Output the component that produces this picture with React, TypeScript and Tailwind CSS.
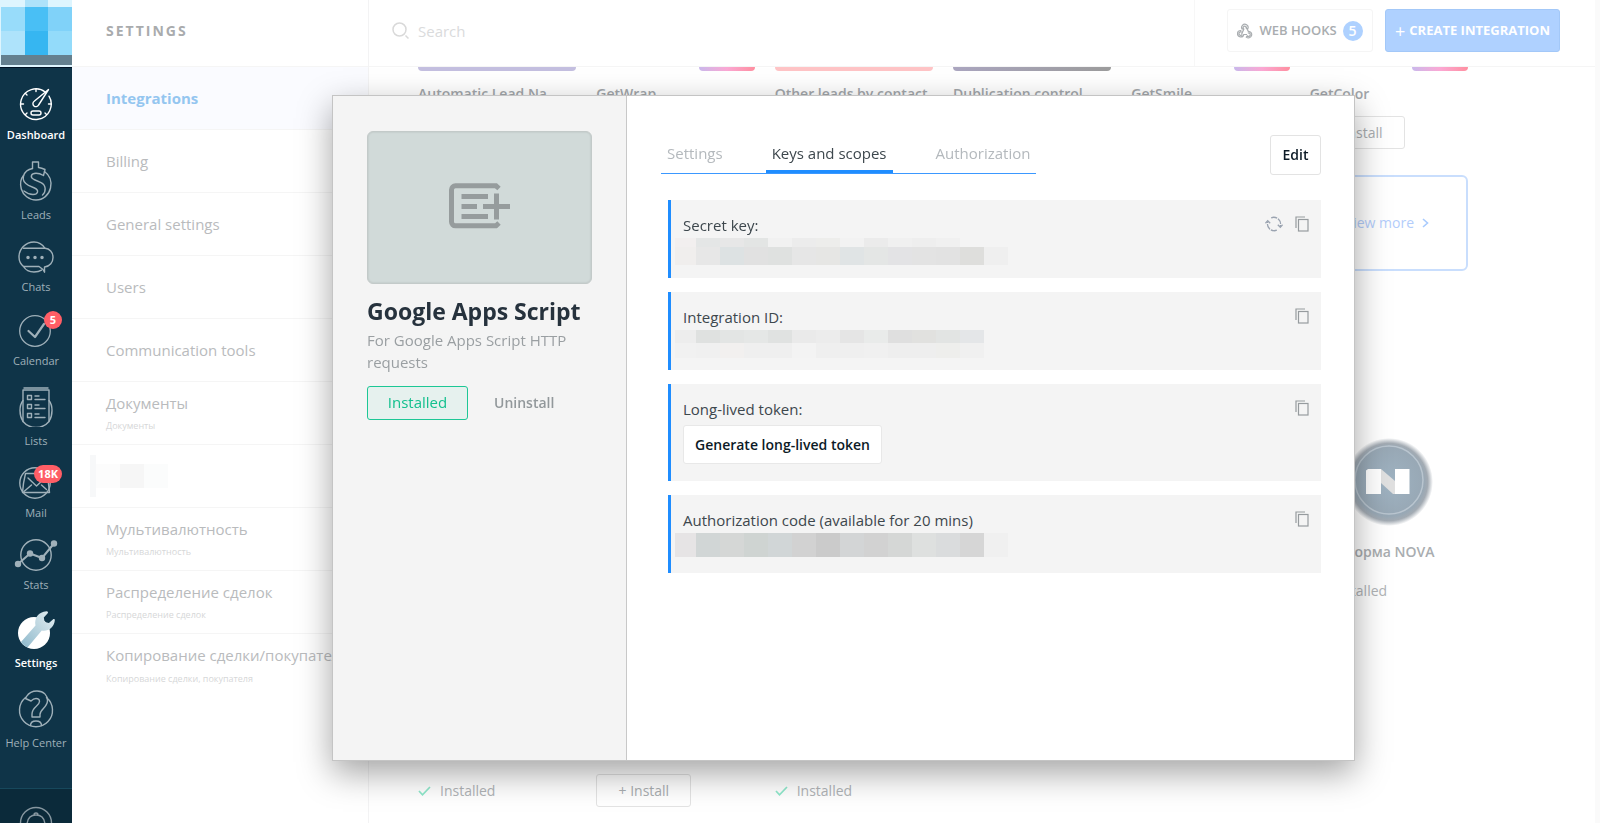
import React, { useState } from 'react';
import clsx from 'clsx';

type IconProps = { className?: string };

const stroke = {
  fill: 'none',
  stroke: 'currentColor',
  strokeWidth: 1.4,
  strokeLinecap: 'round' as const,
  strokeLinejoin: 'round' as const,
};

const DashboardIcon: React.FC = () => (
  <svg width="36" height="34" viewBox="0 0 36 34" {...stroke}>
    <path d="M27.5 5.2A15.3 15.3 0 1 0 31 9.2" />
    <path d="M30.5 2.5 16.2 14.2a3 3 0 1 0 4.4 3.8L30.5 2.5Z" />
    <rect x="13" y="24" width="10" height="4" rx="2" />
    <path d="M18 2v2.5M3 17h2.5M30.5 17H33M7.5 6.5 9 8M7.5 27.5 9 26M28.5 27.5 27 26" />
  </svg>
);

const LeadsIcon: React.FC = () => (
  <svg width="36" height="40" viewBox="0 0 36 40" {...stroke}>
    <path d="M14.500 7.500V1h6v5.500c2.500.3 4.500 1 6.500 2l-1.500 6c-2.500-1.500-5-2.300-7.500-2.300-5 0-6.500 4-2 6.300l7 3.200c5 2.300 5.500 8.800 1.500 12.300" />
    <path d="M14.500 7.500C9 8.500 6.500 11.500 5.500 15c-1 4 .5 7 5 9.300l6 2.700c5 2.300 3.500 6.500-1.500 6.500-3.500 0-6.500-1.500-9-3.500" />
    <path d="M26.500 10.500c5.500 4 7.500 10 6 16.500C31 34 25 39 18 39S5 34 3.300 28C2 23 2.500 18 5.500 14.500" />
  </svg>
);

const ChatsIcon: React.FC = () => (
  <svg width="38" height="32" viewBox="0 0 38 32" {...stroke}>
    <path d="M27.500 31 26 28.500 22 25.500H6.500C8.500 28.800 12.500 31 17 31c3 0 5.500-.5 7.500-1.800" />
    <path d="M27.500 31v-5C33 25.500 36 21 36 16.500 36 11 32.500 7.500 28 7.300H6.500" />
    <path d="M6.500 25.500C3.500 23 2 19.500 2 16 2 8 8.500 1 17 1c4.500 0 8.500 2.500 11 6.300" />
    <path d="M11 16.500h.01M18 16.500h.01M25 16.500h.01" strokeWidth="3.500" />
  </svg>
);

const CalendarIcon: React.FC = () => (
  <svg width="34" height="34" viewBox="0 0 34 34" {...stroke}>
    <circle cx="16" cy="18" r="15.300" strokeWidth="1.300" />
    <path d="m9.500 18 6.500 6L25 11" strokeWidth="2.200" />
  </svg>
);

const ListsIcon: React.FC = () => (
  <svg width="36" height="40" viewBox="0 0 36 40" {...stroke}>
    <path d="M6 1h24M5 3h26v31.500a17 17 0 0 1-26 0V3Z" />
    <path d="M5 13.500c-4 5-4 14.500 0 21M31 13.500c4 5 4 14.500 0 21" />
    <path d="M9.500 8.500h4v4h-4ZM9.500 17.500h4v4h-4ZM9.500 26.500h4v4h-4Z" />
    <path d="M17 9h4M17 12.500h10M17 18h4M17 21.500h10M17 27h4M17 30.500h10" />
  </svg>
);

const MailIcon: React.FC = () => (
  <svg width="36" height="32" viewBox="0 0 36 32" {...stroke}>
    <circle cx="17" cy="16" r="15.200" />
    <path d="M4.500 25.500c.5-8 1.500-13 3-19h20.500c2 6 3.200 11 3.500 19Z" />
    <path d="m10 11 8.500 8L27 11M13.500 18 6 24.500M23.500 18l5 4.500" />
  </svg>
);

const StatsIcon: React.FC = () => (
  <svg width="44" height="32" viewBox="0 0 44 32" {...stroke}>
    <circle cx="22" cy="16" r="15.200" />
    <path d="m4 25 12-10.500L28 19 40 4.500" strokeWidth="2" />
    <g fill="currentColor" stroke="none">
      <circle cx="4" cy="25" r="3.200" />
      <circle cx="16" cy="14.500" r="3.200" />
      <circle cx="28" cy="19" r="3.200" />
      <circle cx="40" cy="4.500" r="3.200" />
    </g>
  </svg>
);

const SettingsIcon: React.FC = () => (
  <svg width="38" height="38" viewBox="0 0 38 38">
    <defs>
      <linearGradient id="wrench" x1="0" y1="1" x2="1" y2="0">
        <stop offset="0" stopColor="#8db8cb" />
        <stop offset="1" stopColor="#e6eff2" />
      </linearGradient>
    </defs>
    <circle cx="17" cy="22" r="16" fill="#fff" />
    <path
      fill="url(#wrench)"
      d="M4 31 18.500 14.500C17 7 21.500 1 29.500.3c1.500 0 2 1.200 1 2.200l-3.700 4 .8 4.500 4.300 1 4-3.600c1-.8 2-.2 1.900 1-.8 7-6.800 11.300-13 10.100L10.500 36.500C8 35.300 5.500 33.500 4 31Z"
    />
  </svg>
);

const HelpIcon: React.FC = () => (
  <svg width="36" height="40" viewBox="0 0 36 40" {...stroke}>
    <path d="M8.500 7.500C11 3.500 14.500 2 19 2c7 0 10.500 4.500 10.500 9.500 0 7-7.500 8.500-7.500 14v2.500h-8v-3c0-7 7.500-8.500 7.500-12.500 0-2-1.500-3-3.500-3s-3.500 1-5 2.500l-5.500-2.500Z" />
    <path d="M7.500 8.500A16.500 16.500 0 1 0 28.500 8.500" />
    <path d="M12.500 36.500c0-3 2.500-4.500 5.500-4.500s5.500 1.500 5.500 4.500" />
  </svg>
);

const BellIcon: React.FC = () => (
  <svg width="36" height="34" viewBox="0 0 36 34" {...stroke}>
    <circle cx="18" cy="17" r="15.500" />
    <path d="M9 20c0-8 3-11 9-11s9 3 9 11M16 9a2 2 0 0 1 4 0" />
  </svg>
);

const SearchIcon: React.FC = () => (
  <svg width="18" height="18" viewBox="0 0 18 18" fill="none" stroke="#d9d9d9" strokeWidth="1.500">
    <circle cx="7.500" cy="7.500" r="6.500" />
    <path d="m13.500 13.500 3 3" />
  </svg>
);

const HookIcon: React.FC = () => (
  <svg width="16" height="16" viewBox="0 0 16 16" fill="none" stroke="#a9adb0" strokeWidth="1.200">
    <path d="M5.500 6.500a3.200 3.200 0 1 1 5.300-.8L9.300 5.200a1.600 1.600 0 1 0-2.500.9L4.500 11.500" />
    <path d="m9 4 2.300 4.300a3.300 3.300 0 1 1-2 5.800l1-1.300a1.700 1.700 0 1 0 .5-2.600" />
    <path d="M10 11.500H6.800a3.200 3.200 0 1 1-3-4l.3 1.500a1.700 1.700 0 1 0 1.100 2.500" />
  </svg>
);

const CheckIcon: React.FC = () => (
  <svg width="13" height="10" viewBox="0 0 13 10" fill="none" stroke="#8fe8cb" strokeWidth="1.700">
    <path d="m1 5 3.500 3.800L12 1" />
  </svg>
);

const RefreshIcon: React.FC = () => (
  <svg width="18" height="16" viewBox="0 0 18 16" fill="none" stroke="#9aa3b0" strokeWidth="1.300">
    <path d="M6.200 1.800A6.800 6.800 0 0 1 15.300 10M11.800 14.200A6.800 6.800 0 0 1 2.700 6" strokeDasharray="6 1" />
    <path d="m12.800 8.800 2.500 2.500 2.300-2.500M.4 7.200l2.300-2.500 2.500 2.500" />
  </svg>
);

const CopyIcon: React.FC = () => (
  <svg width="14" height="16" viewBox="0 0 14 16" fill="none" stroke="#969b9e" strokeWidth="1.200">
    <path d="M1 12V1h9" />
    <rect x="3.500" y="3.500" width="9.500" height="11.500" />
  </svg>
);

const AppPlaceholderIcon: React.FC = () => (
  <svg width="62" height="46" viewBox="0 0 62 46" fill="none" stroke="#969c9d" strokeWidth="5">
    <path d="M50 5.500 47 2.800H6.500a4 4 0 0 0-4 4v32a4 4 0 0 0 4 4H47L50 40" />
    <path d="M12.500 13.500H39M12.500 23.500H28M12.500 33.500H39M34 23.500h27M47.500 10.500v26" />
  </svg>
);

const NovaLogo: React.FC<IconProps> = ({ className }) => (
  <svg className={className} width="88" height="88" viewBox="0 0 88 88">
    <defs>
      <radialGradient id="nova">
        <stop offset="0" stopColor="#9fb3c2" />
        <stop offset="0.78" stopColor="#98a8b5" />
        <stop offset="0.88" stopColor="#a3abb3" />
        <stop offset="1" stopColor="#fff" />
      </radialGradient>
    </defs>
    <circle cx="44" cy="44" r="44" fill="url(#nova)" />
    <circle cx="44" cy="42" r="34" fill="none" stroke="#b9c5cf" strokeWidth="1.500" />
    <path fill="#fff" d="M21 32.500 23 31h13v25H21ZM50 31h14.500v25H50Z" />
    <path fill="#e0e0e0" d="m36 31 14 12v13h-2L36 45Z" />
  </svg>
);

const sideItems = [
  { label: 'Dashboard', icon: DashboardIcon, bright: true },
  { label: 'Leads', icon: LeadsIcon },
  { label: 'Chats', icon: ChatsIcon },
  { label: 'Calendar', icon: CalendarIcon, badge: '5' },
  { label: 'Lists', icon: ListsIcon },
  { label: 'Mail', icon: MailIcon, badge: '18K' },
  { label: 'Stats', icon: StatsIcon },
  { label: 'Settings', icon: SettingsIcon, bright: true },
  { label: 'Help Center', icon: HelpIcon },
];

const settingsItems: { label?: string; sub?: string; active?: boolean }[] = [
  { label: 'Integrations', active: true },
  { label: 'Billing' },
  { label: 'General settings' },
  { label: 'Users' },
  { label: 'Communication tools' },
  { label: 'Документы', sub: 'Документы' },
  {},
  { label: 'Мультивалютность', sub: 'Мультивалютность' },
  { label: 'Распределение сделок', sub: 'Распределение сделок' },
  { label: 'Копирование сделки/покупателя', sub: 'Копирование сделки, покупателя' },
];

const widgets = [
  { title: 'Automatic Lead Na', strip: 'w-full bg-[#c4bfe0]' },
  { title: 'GetWrap', strip: 'ml-auto w-14 bg-linear-to-r from-[#c9b8ec] via-[#fba8d4] to-[#ff8fa0]' },
  { title: 'Other leads by contact', strip: 'w-full bg-[#ffc4c6]' },
  { title: 'Dublication control', strip: 'w-full bg-linear-to-r from-[#aba6c0] to-[#9c9c9c]' },
  { title: 'GetSmile', strip: 'ml-auto w-14 bg-linear-to-r from-[#c9b8ec] via-[#fba8d4] to-[#ff8fa0]' },
  { title: 'GetColor', strip: 'ml-auto w-14 bg-linear-to-r from-[#c9b8ec] via-[#fba8d4] to-[#ff8fa0]', install: true },
];

const logoTiles = [
  ['bg-[#def5fe]', 'bg-[#ade2fa]', 'bg-[#def5fe]'],
  ['bg-[#98dcfa]', 'bg-[#49bff5]', 'bg-[#80d2f9]'],
  ['bg-[#aee3fb]', 'bg-[#36b6f1]', 'bg-[#93dbfa]'],
];

const secretTiles = [
  {
    height: 'h-[9px]',
    tiles: ['bg-[#f2efef]', 'bg-[#e4e6e6]', 'bg-[#e7e7e7]', 'bg-[#e3e5e4]', 'bg-[#f1f1f1]', 'bg-[#ececec]', 'bg-[#ededeb]', 'bg-[#f2f2f2]', 'bg-[#ebebeb]', 'bg-[#f0f0f0]', 'bg-[#eeeeee]', 'bg-[#f0f0f0]'],
  },
  {
    height: 'h-[18px]',
    tiles: ['bg-[#f0eeed]', 'bg-[#e7e7e7]', 'bg-[#dde2e3]', 'bg-[#e1e1e1]', 'bg-[#dfe1e0]', 'bg-[#e6e6e6]', 'bg-[#e6e6e4]', 'bg-[#e0e4e5]', 'bg-[#e4e6e5]', 'bg-[#e3e3e5]', 'bg-[#e3e3e3]', 'bg-[#e2e2e2]', 'bg-[#dededc]', 'bg-[#efefef]'],
  },
];

const idTiles = [
  {
    height: 'h-[13px]',
    tiles: ['bg-[#ededed]', 'bg-[#dfe1e0]', 'bg-[#e3e5e4]', 'bg-[#e5e7e6]', 'bg-[#e0e2e1]', 'bg-[#eaeaea]', 'bg-[#ececec]', 'bg-[#e5e5e5]', 'bg-[#e9ebea]', 'bg-[#dfdfdf]', 'bg-[#e1e1df]', 'bg-[#e2e4e3]', 'bg-[#e4e6e8]'],
  },
  {
    height: 'h-[15px]',
    tiles: ['bg-[#f1f1f1]', 'bg-[#f0f0f0]', 'bg-[#f2f0ef]', 'bg-[#efefef]', 'bg-[#efefef]', 'bg-[#f3f3f3]', 'bg-[#efefef]', 'bg-[#efefef]', 'bg-[#f0f0f0]', 'bg-[#eeeeee]', 'bg-[#eeeeee]', 'bg-[#eeeeec]', 'bg-[#f0f0f0]'],
  },
];

const codeTiles = [
  {
    height: 'h-[24px]',
    tiles: ['bg-[#e6e4e5]', 'bg-[#d1d6d6]', 'bg-[#d5d7d6]', 'bg-[#cfd4d2]', 'bg-[#d1d6d7]', 'bg-[#d2d2d2]', 'bg-[#cbcbcb]', 'bg-[#d3d5d6]', 'bg-[#d2d2d2]', 'bg-[#d5d7d6]', 'bg-[#dee0df]', 'bg-[#dadcdd]', 'bg-[#d6d6d6]', 'bg-[#f0f0f0]'],
  },
];

const MaskedValue: React.FC<{ rows: typeof codeTiles }> = ({ rows }) => (
  <div className="-ml-2">
    {rows.map((row, i) => (
      <div key={i} className={clsx('flex', row.height)}>
        {row.tiles.map((tile, j) => (
          <span key={j} className={clsx(tile, j === 0 ? 'w-[21px]' : 'w-6')} />
        ))}
      </div>
    ))}
  </div>
);

const KeyBlock: React.FC<{ label: string; refresh?: boolean; children: React.ReactNode }> = ({ label, refresh, children }) => (
  <section className="flex min-h-[78px] items-start justify-between border-l-3 border-[#1f8dff] bg-[#f4f4f4] pt-[14px] pr-3 pl-3">
    <div>
      <h3 className="pb-0.5 leading-[22px] text-[#3d474d]">{label}</h3>
      {children}
    </div>
    <div className="flex items-center gap-3 pt-0.5">
      {refresh && (
        <button aria-label="Refresh">
          <RefreshIcon />
        </button>
      )}
      <button aria-label={`Copy ${label}`}>
        <CopyIcon />
      </button>
    </div>
  </section>
);

const InstallButton: React.FC = () => (
  <button className="flex h-[33px] w-[95px] items-center justify-center rounded-[3px] border border-[#e3e3e3] text-sm text-[#a9adb0]">
    + Install
  </button>
);

const InstalledMark: React.FC = () => (
  <div className="flex h-[33px] items-center gap-[9px] text-sm text-[#b0b3b6]">
    <CheckIcon />
    Installed
  </div>
);

const Sidebar: React.FC = () => (
  <aside className="flex w-[72px] shrink-0 flex-col bg-[#0f3448]">
    <div className="h-[67px] shrink-0 bg-[#def5fe] pl-px">
      {logoTiles.map((row, i) => (
        <div key={i} className={clsx('flex', i === 0 ? 'h-[7px]' : 'h-6')}>
          {row.map((tile, j) => (
            <span key={j} className={clsx('flex-1', tile)} />
          ))}
        </div>
      ))}
      <div className="h-[10px] bg-[#64808f]" />
    </div>
    <nav className="flex flex-1 flex-col items-center gap-[18px] border-t border-[#001225] pt-[19px]">
      {sideItems.map(({ label, icon: Icon, badge, bright }) => (
        <a
          key={label}
          href="#"
          className={clsx(
            'relative flex w-full flex-col items-center gap-1.5 text-[11px] leading-4 whitespace-nowrap',
            bright ? 'font-semibold text-white' : 'text-[#9fb0b9]'
          )}
        >
          <Icon />
          {label}
          {badge && (
            <span className="absolute -top-0.5 right-2.5 min-w-[18px] rounded-full bg-[#ff5e66] px-1 text-center leading-[18px] font-bold text-white">
              {badge}
            </span>
          )}
        </a>
      ))}
    </nav>
    <div className="flex h-[35px] shrink-0 justify-center overflow-hidden border-t border-[#17485c] bg-[#0b2a3a] pt-[17px] text-[#8797a0]">
      <BellIcon />
    </div>
  </aside>
);

const SettingsMenu: React.FC = () => (
  <div className="flex w-[297px] shrink-0 flex-col border-r border-[#f3f3f4]">
    <h2 className="flex h-[67px] shrink-0 items-center border-b border-[#f5f5f5] pb-1 pl-[34px] text-sm font-bold tracking-[2px] text-[#a9abad]">
      SETTINGS
    </h2>
    {settingsItems.map((item, i) => (
      <a
        key={i}
        href="#"
        className={clsx(
          'flex h-[63px] shrink-0 flex-col justify-center overflow-hidden pl-[34px] whitespace-nowrap',
          i < settingsItems.length - 1 && 'border-b border-[#f5f5f5]',
          item.active ? 'bg-[#fafbff] font-bold text-[#94c6f0]' : 'text-[#b9bbbd]'
        )}
      >
        {item.label}
        {item.sub && <span className="pt-1 text-[9px] leading-4 text-[#d6d7d8]">{item.sub}</span>}
        {!item.label && (
          <span className="-ml-4 flex h-[42px] items-center">
            <span className="h-full w-1.5 bg-[#f7f8f9]" />
            <span className="h-6 w-6 bg-[#fcfcfc]" />
            <span className="h-6 w-6 bg-[#f6f6f6]" />
            <span className="h-6 w-6 bg-[#fbfcfc]" />
          </span>
        )}
      </a>
    ))}
  </div>
);

const Marketplace: React.FC = () => (
  <main className="flex min-w-0 flex-1 flex-col">
    <header className="flex h-[67px] shrink-0 border-b border-[#f5f5f5]">
      <label className="flex flex-1 items-center gap-2 pb-1 pl-[23px]">
        <SearchIcon />
        <input
          aria-label="Search"
          placeholder="Search"
          className="flex-1 outline-none placeholder:text-[#dadbdc]"
        />
      </label>
      <div className="flex items-start gap-3 border-l border-[#f7f7f7] pt-[9px] pr-[35px] pl-8 text-sm">
        <button className="flex h-[43px] w-[146px] items-center justify-center gap-1.5 rounded-[3px] border border-[#f5f5f5] font-semibold whitespace-nowrap text-[#a9adb0]">
          <HookIcon />
          <span className="text-[13px]">WEB HOOKS</span>
          <span className="h-5 w-5 rounded-full bg-[#aed1ff] text-center leading-5 text-white">5</span>
        </button>
        <button className="flex h-[43px] w-[175px] items-center justify-center gap-1 rounded-[3px] border border-[#a3c8f8] bg-[#afd1ff] text-[13px] font-bold whitespace-nowrap text-white">
          <span className="text-lg font-normal">+</span>
          CREATE INTEGRATION
        </button>
      </div>
    </header>
    <div className="flex-1 pr-[127px] pl-[49px]">
      <div className="grid grid-cols-6 gap-x-5">
        {widgets.map((w) => (
          <div key={w.title} className="min-w-0">
            <div className={clsx('h-1 rounded-b', w.strip)} />
            <h3 className="mt-[11px] mb-[10px] text-sm leading-6 font-semibold whitespace-nowrap text-[#a3a7ab]">{w.title}</h3>
            {w.install && <InstallButton />}
          </div>
        ))}
      </div>
      <div className="mt-[26px] flex h-24 items-center justify-end rounded-md border-2 border-[#c9defd] pr-[37px] text-sm text-[#b3cdfb]">
        <a href="#" className="flex items-center gap-2">
          View more
          <svg width="7" height="10" viewBox="0 0 7 10" fill="none" stroke="#a9cbfd" strokeWidth="1.600">
            <path d="m1 1 4.500 4L1 9" />
          </svg>
        </a>
      </div>
      <div className="mt-[167px] grid grid-cols-6 gap-x-5">
        <div className="col-start-6">
          <NovaLogo className="mx-auto" />
          <h3 className="mt-[14px] mb-[10px] text-sm leading-6 font-semibold whitespace-nowrap text-[#a9adb0]">Платформа NOVA</h3>
          <InstalledMark />
        </div>
      </div>
      <div className="mt-[167px] grid grid-cols-6 gap-x-5">
        <InstalledMark />
        <InstallButton />
        <InstalledMark />
      </div>
    </div>
  </main>
);

const tabs = ['Settings', 'Keys and scopes', 'Authorization'];

const IntegrationModal: React.FC = () => {
  const [activeTab, setActiveTab] = useState('Keys and scopes');

  return (
    <div className="fixed inset-0 flex pt-[95px] pr-[245px] pb-[62px] pl-[332px]">
      <div
        role="dialog"
        aria-label="Google Apps Script"
        className="flex flex-1 border border-[#c4c4c4] bg-white shadow-[0_12px_32px_rgba(0,0,0,0.36)]"
      >
        <div className="w-[294px] shrink-0 border-r border-[#c8c8c8] bg-[#f4f4f4] pt-[35px] pr-[34px] pl-[34px]">
          <div className="flex h-[153px] items-center justify-center rounded-md border border-[#c3cac9] bg-[#d1dad9] pb-1 shadow-[inset_0_0_2px_rgba(0,0,0,0.15)]">
            <AppPlaceholderIcon />
          </div>
          <h1 className="mt-[11px] text-[23px] leading-8 font-bold whitespace-nowrap text-[#26323d]">Google Apps Script</h1>
          <p className="mt-0.5 leading-[22px] text-[#9a9fa2]">For Google Apps Script HTTP requests</p>
          <div className="mt-[13px] flex items-center">
            <button className="h-[34px] w-[101px] rounded-[3px] border border-[#1dc795] bg-[#e6f1ee] pb-0.5 text-[#13c08e]">
              Installed
            </button>
            <button className="pl-[26px] text-sm font-semibold text-[#92989b]">Uninstall</button>
          </div>
        </div>

        <div className="flex-1 pt-[39px] pr-[33px] pl-[34px]">
          <div className="flex items-start justify-between">
            <div role="tablist" className="flex gap-[37px] border-b border-[#3b98ff]">
              {tabs.map((tab) => (
                <button
                  key={tab}
                  role="tab"
                  aria-selected={activeTab === tab}
                  onClick={() => setActiveTab(tab)}
                  className={clsx(
                    'h-[38px] border-b-3 px-1.5 pt-0.5',
                    activeTab === tab ? 'border-[#1f8dff] text-[#3d474d]' : 'border-transparent text-[#b4b9bd]'
                  )}
                >
                  {tab}
                </button>
              ))}
            </div>
            <button className="h-10 w-[51px] rounded-[3px] border border-[#e3e3e3] text-sm font-semibold text-[#0c1a26]">
              Edit
            </button>
          </div>

          <div className="mt-[25px] ml-[7px] flex flex-col gap-[14px]">
            <KeyBlock label="Secret key:" refresh>
              <MaskedValue rows={secretTiles} />
            </KeyBlock>
            <KeyBlock label="Integration ID:">
              <MaskedValue rows={idTiles} />
            </KeyBlock>
            <KeyBlock label="Long-lived token:">
              <button className="mt-[3px] mb-[17px] h-[39px] w-[199px] rounded-[3px] border border-[#e8e8e8] bg-white text-sm font-semibold text-[#0c1a26]">
                Generate long-lived token
              </button>
            </KeyBlock>
            <KeyBlock label="Authorization code (available for 20 mins)">
              <MaskedValue rows={codeTiles} />
            </KeyBlock>
          </div>
        </div>
      </div>
    </div>
  );
};

const App: React.FC = () => (
  <div className="flex h-screen overflow-hidden bg-white font-['Open_Sans','Noto_Sans',sans-serif] text-[15px]">
    <Sidebar />
    <SettingsMenu />
    <Marketplace />
    <div className="w-[5px] shrink-0 bg-[#fafafa]" />
    <IntegrationModal />
  </div>
);

export default App;
